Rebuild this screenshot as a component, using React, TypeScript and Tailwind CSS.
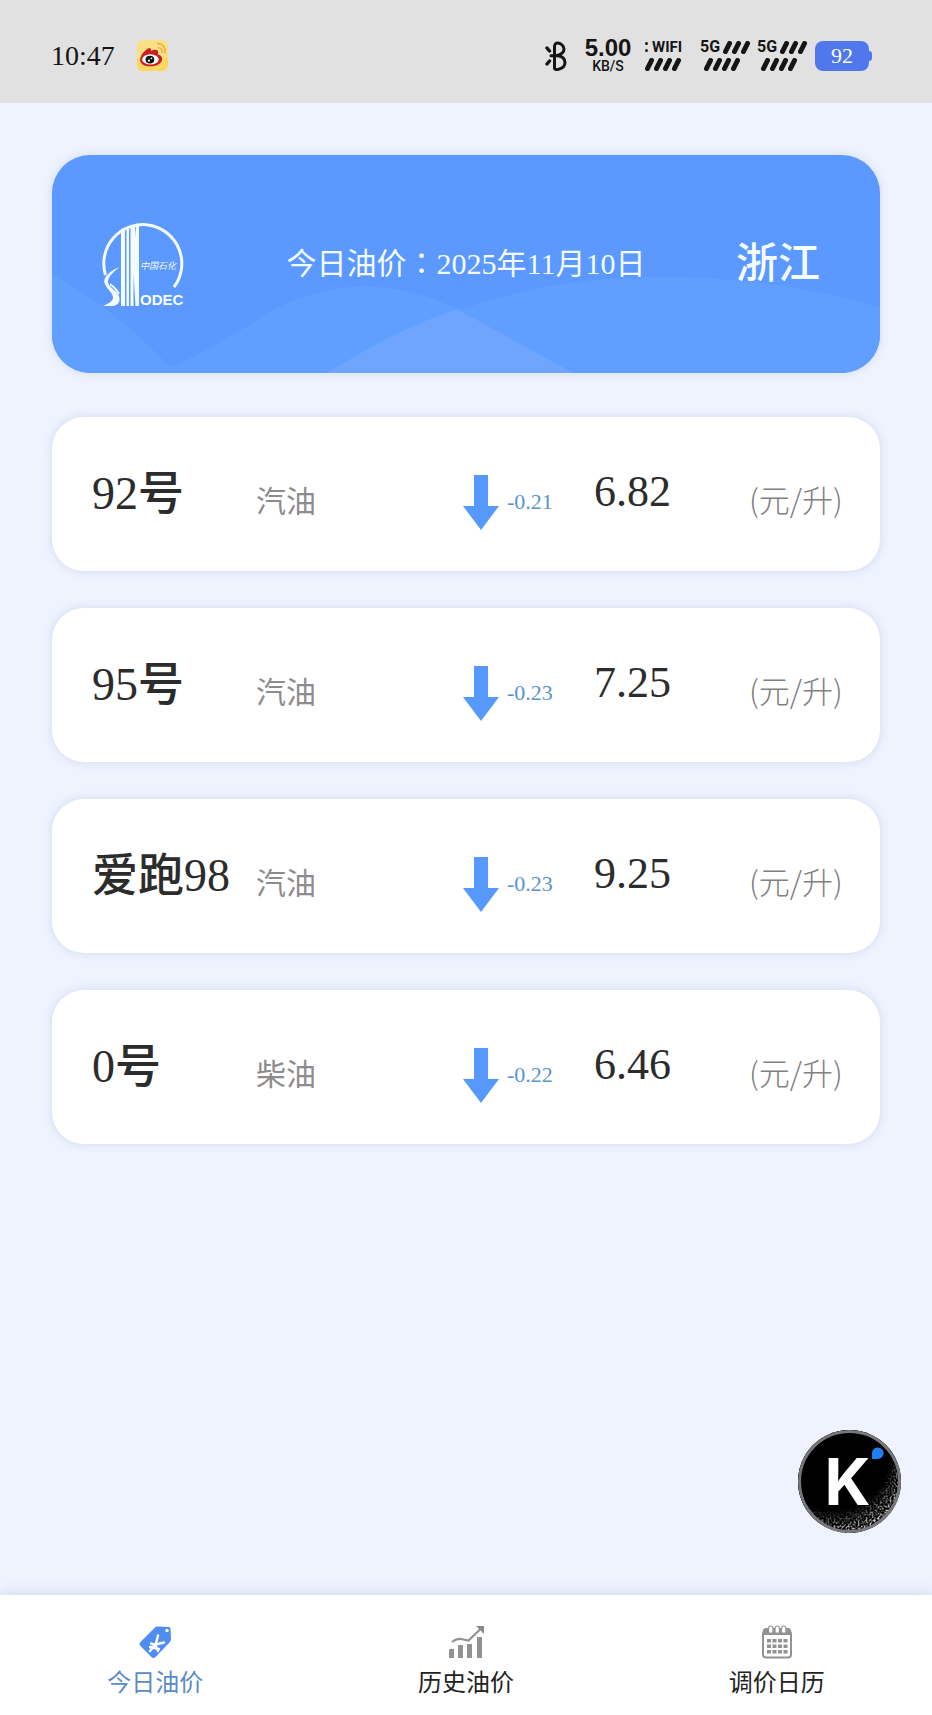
import React from "react";

type Fuel = { grade: string; kind: string; delta: string; price: string };

const fuels: Fuel[] = [
  { grade: "92号", kind: "汽油", delta: "-0.21", price: "6.82" },
  { grade: "95号", kind: "汽油", delta: "-0.23", price: "7.25" },
  { grade: "爱跑98", kind: "汽油", delta: "-0.23", price: "9.25" },
  { grade: "0号", kind: "柴油", delta: "-0.22", price: "6.46" },
];

function WeiboIcon() {
  return (
    <svg viewBox="0 0 30 30" className="size-[31px]" aria-hidden="true">
      <rect width="30" height="30" rx="6" fill="#fbdf85" />
      <path d="M0 18h30v6a6 6 0 0 1-6 6H6a6 6 0 0 1-6-6z" fill="#fcd34f" opacity=".7" />
      <path d="M20 3.500c5 0 8 4 7.200 9M20.500 7.500c2.600 0 4.200 2 3.800 4.500" fill="none" stroke="#e9b450" strokeWidth="1.600" strokeLinecap="round" />
      <path d="M3 19c0-4 5-10 8.500-11 2-.5 2.500 1 2 2.500 3-1.500 7-2 7 1.500 0 1 0 1.500-.2 2 3 .8 4.500 2.800 4 5-.8 4-6 6.500-11.500 6.500S3 23 3 19z" fill="#c81f20" />
      <ellipse cx="13" cy="18.800" rx="8" ry="5" fill="#fff" />
      <ellipse cx="12.500" cy="19" rx="4.200" ry="3.700" fill="#111" />
      <circle cx="11.500" cy="20" r="1.100" fill="#fff" />
      <circle cx="14" cy="17.800" r=".8" fill="#fff" />
    </svg>
  );
}

function BluetoothIcon() {
  return (
    <svg viewBox="0 0 22 30" className="h-[30px] w-[22px]" fill="none" stroke="#151515" strokeLinecap="round" strokeLinejoin="round" aria-hidden="true">
      <path d="M9.500 27.500V5.500C9.500 3 11 1.800 13 2c3 .4 6 3 6 6 0 3.500-3 5.500-7 6.500 5 .7 8 3.500 8 7 0 3.500-3 6-6.500 6.800-2 .4-4 .2-4-.8z" strokeWidth="3" />
      <path d="M2 7l2.500 3M2 23l2.500-3" strokeWidth="3.400" />
      <path d="M6 14.800h6" strokeWidth="3" />
    </svg>
  );
}

function Slashes({ count }: { count: number }) {
  return (
    <span className="flex" aria-hidden="true">
      {Array.from({ length: count }, (_, i) => (
        <svg key={i} viewBox="0 0 9 13" className="h-[13px] w-[9px]">
          <path d="M6.500 2.500L2.500 10.500" stroke="#151515" strokeWidth="5" strokeLinecap="round" />
        </svg>
      ))}
    </span>
  );
}

function CellSignal() {
  return (
    <div className="flex w-[50px] flex-col gap-1">
      <div className="flex h-[13px] items-center gap-[3px]">
        <span className="font-[Roboto] text-base leading-none font-bold">5G</span>
        <Slashes count={3} />
      </div>
      <div className="pl-1">
        <Slashes count={4} />
      </div>
    </div>
  );
}

function StatusBar() {
  return (
    <header className="flex h-[103px] items-center justify-between bg-[#e1e1e1] pt-2 pr-[60px] pl-[51px] text-[#151515]">
      <div className="flex items-center gap-[22px]">
        <time className="text-[28px] leading-none">10:47</time>
        <WeiboIcon />
      </div>
      <div className="flex items-center">
        <BluetoothIcon />
        <div className="ml-4 flex w-[50px] flex-col items-center font-['Liberation_Sans']">
          <span className="text-2xl leading-[20px] font-bold">5.00</span>
          <span className="font-[Roboto] text-sm leading-4 font-medium">KB/S</span>
        </div>
        <div className="ml-3 flex w-10 flex-col gap-1">
          <div className="flex h-[13px] items-center gap-1">
            <span className="flex flex-col gap-1">
              <i className="size-[3px] rounded-full bg-[#151515]" />
              <i className="size-[3px] rounded-full bg-[#151515]" />
            </span>
            <span className="font-[Roboto] text-[15px] leading-none font-bold">WIFI</span>
          </div>
          <Slashes count={4} />
        </div>
        <div className="ml-[15px] flex gap-[7px]">
          <CellSignal />
          <CellSignal />
        </div>
        <div className="ml-2 flex items-center">
          <span className="flex h-[30px] w-[54px] items-center justify-center rounded-lg bg-[#5078ec] text-[22px] leading-none text-white">92</span>
          <span className="h-[10px] w-[3px] rounded-r-sm bg-[#5078ec]" />
        </div>
      </div>
    </header>
  );
}

function SinopecLogo() {
  return (
    <svg viewBox="0 0 84 86" className="h-[86px] w-[84px] shrink-0 overflow-visible" role="img" aria-label="中国石化">
      <path d="M3.500 54A39 39 0 1 1 72 66" fill="none" stroke="#f4fcff" strokeWidth="3" />
      <path d="M19 8l4-1.500V85h-4zM24.500 6l2.500-1V85h-2.500zM28.500 4.500l3-.5V85h-3zM28.500 4.500h4.500L37 52v33h-3.500zM34 4H37v81h-3z" fill="#f4fcff" />
      <path d="M17.500 46C8 50 1 56 2.500 62c1 5 8 9 8.500 14 .3 4-4 6-10 9h10c5-1 7-4 6.500-8C17 70 6 67 6 61c0-5 5-10 11.500-15z" fill="#f4fcff" />
      <path d="M8 63c4 3 7 6 9 10" stroke="#f4fcff" strokeWidth="2" fill="none" />
      <text x="38" y="48" fontSize="9" fill="#f4fcff" fontStyle="italic" fontFamily="'Noto Sans CJK SC', sans-serif">中国石化</text>
      <text x="38" y="84" fontSize="15" fontWeight="700" fill="#f4fcff" fontFamily="'Liberation Sans', sans-serif">ODEC</text>
    </svg>
  );
}

function Banner() {
  return (
    <section className="relative flex h-[218px] items-center overflow-hidden rounded-[38px] bg-[#5b98ff] pr-[60px] pl-[50px] text-[#f4fcff] shadow-[0_0_10px_rgba(90,100,140,0.18)]">
      <svg viewBox="0 0 828 218" preserveAspectRatio="none" className="absolute inset-0 size-full" aria-hidden="true">
        <path d="M0 118Q70 160 118 212Q150 200 221 155Q310 108 408 155Q500 122 605 122Q730 122 828 153V218H0z" fill="#609fff" />
        <path d="M275 218Q350 172 398 157Q404 153 412 158Q470 190 521 218z" fill="#6fa5ff" />
      </svg>
      <div className="relative flex w-full items-center justify-between">
        <SinopecLogo />
        <h1 className="ml-[10px] pb-1 text-[30px] leading-none">
          今日油价<span className="font-['Noto_Sans_CJK_TC',sans-serif] leading-none">：</span>2025年11月10日
        </h1>
        <button type="button" className="text-[42px] leading-none font-medium">浙江</button>
      </div>
    </section>
  );
}

function FuelCard({ fuel }: { fuel: Fuel }) {
  return (
    <li className="grid h-[154px] grid-cols-[164fr_207fr_44fr_87fr_155fr_96fr] items-center rounded-[32px] bg-white pr-[35px] pl-10 whitespace-nowrap text-[#2c2c2c] shadow-[0_0_10px_rgba(90,100,140,0.18)]">
      <span className="text-[46px] leading-none font-medium">{fuel.grade}</span>
      <span className="pt-4 text-[30px] leading-none text-[#8c8c8c]">{fuel.kind}</span>
      <svg viewBox="0 0 36 55" className="mt-4 h-[55px] w-9" role="img" aria-label="下降">
        <path d="M11 0h14v31h11L18 55 0 31h11z" fill="#5698fc" />
      </svg>
      <span className="pt-4 text-[22px] leading-none text-[#5b93cb]">{fuel.delta}</span>
      <span className="pb-1 text-[44px] leading-none">{fuel.price}</span>
      <span className="pt-2 font-['Noto_Sans_CJK_SC',sans-serif] text-[31px] leading-none font-light text-[#808080]">(元/升)</span>
    </li>
  );
}

function AssistantButton() {
  return (
    <button type="button" aria-label="K" className="absolute right-[31px] bottom-[62px] flex size-[103px] items-center justify-center overflow-hidden rounded-full bg-black pr-1 text-white">
      <svg viewBox="0 0 103 103" className="absolute inset-0 size-full" aria-hidden="true">
        <defs>
          <radialGradient id="shade" cx="35%" cy="25%" r="76%">
            <stop offset="70%" stopColor="#000" />
            <stop offset="100%" stopColor="#000" stopOpacity="0" />
          </radialGradient>
          <filter id="grain" x="0" y="0" width="100%" height="100%">
            <feTurbulence type="fractalNoise" baseFrequency="0.5" numOctaves="2" seed="4" />
            <feColorMatrix values="0 0 0 0 .65  0 0 0 0 .65  0 0 0 0 .65  4 0 0 0 -1.700" />
          </filter>
        </defs>
        <rect width="103" height="103" filter="url(#grain)" />
        <rect width="103" height="103" fill="url(#shade)" />
        <circle cx="51.500" cy="51.500" r="50" fill="none" stroke="#77787c" strokeWidth="3" />
        <path d="M74 29v-5.500a5.800 5.800 0 1 1 5.800 5.500z" fill="#1f80f2" />
      </svg>
      <span className="relative font-[Inter] text-[64px] leading-none font-bold">K</span>
    </button>
  );
}

function TagIcon() {
  return (
    <svg viewBox="0 0 34 34" className="size-[34px]" aria-hidden="true">
      <path d="M17 2.500Q18 1.500 20 1.500L31 2q1.500 0 1.500 1.500L33 14q0 2-1.500 3.500L17.500 32q-2 2-4 0L2.500 21q-2-2 0-4z" fill="#4f8df2" />
      <circle cx="29" cy="5.500" r="1.700" fill="#fff" />
      <path d="M20 10.500L17.500 20M17.500 19.500L26 17.500M17 20L12 26M13 18.500l4.500 1.500M12 22l9 2M17 19l3 7" stroke="#fff" strokeWidth="2.400" strokeLinecap="round" fill="none" />
    </svg>
  );
}

function TrendIcon() {
  return (
    <svg viewBox="0 0 36 34" className="h-[34px] w-9" aria-hidden="true">
      <path d="M1 24h5v9H1zM10 20h5v13h-5zM19 19h5v14h-5zM29 12h5v21h-5z" fill="#929292" />
      <path d="M4 17Q9 13 13 14l7.500 1.500L32 4.500" stroke="#929292" strokeWidth="2.200" fill="none" />
      <path d="M28 1h8v8z" fill="#8a8a8a" />
    </svg>
  );
}

function CalendarIcon() {
  return (
    <svg viewBox="0 0 30 34" className="h-[34px] w-[30px]" aria-hidden="true">
      <rect x="1" y="6" width="28" height="26.500" rx="3" fill="#fff" stroke="#929292" strokeWidth="2" />
      <path d="M1 6q0-3 3-3h22q3 0 3 3v4H1z" fill="#929292" />
      <path d="M6.500 8V4q0-3 2.200-3T11 4v4zM13 8V4q0-3 2.200-3t2.300 3v4zM19.500 8V4q0-3 2.200-3T24 4v4z" fill="#fff" stroke="#929292" strokeWidth="1.200" />
      {[14, 19.5, 25].map((y) =>
        [5, 10.5, 16, 21.5].map((x) => <rect key={`${x}-${y}`} x={x} y={y} width="4" height="3.500" fill="#929292" />),
      )}
    </svg>
  );
}

const tabs = [
  { label: "今日油价", icon: <TagIcon />, active: true },
  { label: "历史油价", icon: <TrendIcon />, active: false },
  { label: "调价日历", icon: <CalendarIcon />, active: false },
];

export default function App() {
  return (
    <div className="flex min-h-screen flex-col bg-[#eef3ff] font-['Liberation_Serif','Noto_Sans_CJK_SC',serif]">
      <StatusBar />
      <main className="relative flex-1 px-[52px] pt-[52px]">
        <Banner />
        <ul className="mt-11 flex flex-col gap-[37px]">
          {fuels.map((fuel) => (
            <FuelCard key={fuel.grade} fuel={fuel} />
          ))}
        </ul>
        <AssistantButton />
      </main>
      <nav className="grid h-[120px] grid-cols-3 bg-white shadow-[0_0_14px_rgba(90,100,130,0.22)]">
        {tabs.map((tab) => (
          <a
            key={tab.label}
            href="#"
            aria-current={tab.active ? "page" : undefined}
            className={`flex flex-col items-center gap-2 pt-[30px] text-2xl ${tab.active ? "text-[#5a8bc8]" : "text-[#222222]"}`}
          >
            {tab.icon}
            <span className="leading-8">{tab.label}</span>
          </a>
        ))}
      </nav>
    </div>
  );
}
